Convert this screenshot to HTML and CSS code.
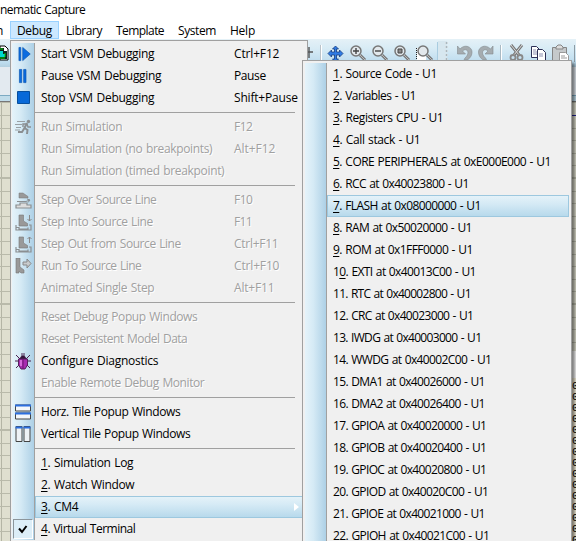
FILE: index.html
```
<!DOCTYPE html>
<html lang="en">
<head>
<meta charset="utf-8">
<title>Schematic Capture</title>
<link rel="stylesheet" href="styles.css">
</head>
<body>
<div class="window">
  <header class="titlebar"><span data-w="85">nematic Capture</span></header>
  <nav class="menubar">
    <span class="cut">n</span>
    <span class="menu-title open"><span data-w="34.7">Debug</span></span>
    <span class="menu-title"><span data-w="35.7">Library</span></span>
    <span class="menu-title"><span data-w="47.7">Template</span></span>
    <span class="menu-title"><span data-w="37.7">System</span></span>
    <span class="menu-title"><span data-w="24.7">Help</span></span>
  </nav>
  <div class="toolbar">
    <svg class="chip" width="9" height="18" viewBox="0 0 9 18"><path d="M0 1h5l3 3v11H0z" fill="#fff" stroke="#000"/><path d="M0 3h4v3h3v8H0z" fill="#0a2520"/><path d="M0 6h3v3h2v3H0z" fill="#00d8d0"/><path d="M0 4h3M5 8v4M0 13h5" stroke="#00d000"/></svg>
    <svg class="tools" width="269" height="28" viewBox="307 39 269 28">
      <path d="M307 52h6M309 47v11" stroke="#555" stroke-width="1.4"/>
      <path d="M320.500 45v21" stroke="#bac3ca"/><path d="M321.500 45v21" stroke="#fff"/>
      <path d="M335.500 46l3 3h-2v3h3v-2l3.500 3.500-3.500 3.500v-2h-3v4h2l-3 3-3-3h2v-4h-3v2l-3.500-3.500 3.500-3.500v2h3v-3h-2z" fill="#2f7be5" stroke="#173c7c" stroke-width=".8"/>
      <g id="lens"><circle cx="356" cy="51" r="5" fill="#e2e8ec" stroke="#777" stroke-width="1.500"/><path d="M360 55l5 5" stroke="#777" stroke-width="3"/><path d="M360 55l5 5" stroke="#bbb"/></g>
      <path d="M353 51h6M356 48v6" stroke="#444" stroke-width="1.400"/>
      <use href="#lens" x="22"/><path d="M375 51h6" stroke="#444" stroke-width="1.400"/>
      <use href="#lens" x="44"/><path d="M398 49h4v4h-4z" fill="#888" stroke="#444"/>
      <path d="M417 48h9v14h-9z" fill="#fff"/><path d="M416.500 48v14" stroke="#222" stroke-dasharray="1 1"/>
      <use href="#lens" x="67"/>
      <path d="M437.500 42v24" stroke="#a9cce0"/><path d="M438 41h9v26h-9z" fill="#d7e7ef"/>
      <path d="M446.500 42v24" stroke="#fff" stroke-width="3" stroke-dasharray="2 2"/><path d="M446.500 42v24" stroke="#a8b8c0" stroke-width="2" stroke-dasharray="2 2"/>
      <path id="undo" d="M457.500 46v8h8l-3-3c3-2.500 5.500-1 5.500 2-.2 3-3 4.500-4 6.500h4c3-2 4-5 4-7.500 0-5-7-8.500-12-3z" fill="#a5acb0" stroke="#858b8f" stroke-width=".6"/>
      <use href="#undo" transform="matrix(-1 0 0 1 950.500 0)"/>
      <path d="M500.500 45v21" stroke="#a9bac4"/><path d="M501.500 45v21" stroke="#fff"/>
      <path d="M511 45l8 10M522 45l-8 10" stroke="#777" stroke-width="3"/><path d="M511 45l8 10M522 45l-8 10" stroke="#ddd"/><circle cx="513" cy="57.500" r="2.500" fill="none" stroke="#888" stroke-width="1.800"/><circle cx="520" cy="57.500" r="2.500" fill="none" stroke="#888" stroke-width="1.800"/>
      <path id="sheet" d="M531.500 46.500h5l3 3v8h-8z" fill="#fff" stroke="#2e3157"/><use href="#sheet" x="6" y="3"/><path d="M533 50h3M533 52h4M533 54h4M539 54h4M539 56h4" stroke="#8d90b0"/>
      <path d="M552.500 47.500h14v14h-14z" fill="#c5c9cb" stroke="#858585"/><path d="M556 49v-2l2-2h3l2 2v2z" fill="#ddd" stroke="#858585"/><path d="M559.500 52.500h6l3 3v6h-9z" fill="#fff" stroke="#999"/><path d="M561 56h4M561 58h6" stroke="#999"/>
      <path d="M574.500 45v17" stroke="#8d9ba4"/>
    </svg>
  </div>
  <div class="panel"></div>
  <div class="ruler"></div>
  <main class="canvas">
    <svg class="grid" width="576" height="439" viewBox="0 102 576 439" id="grid"></svg>
    <div class="hexdump" id="hexdump"></div>
  </main>
</div>

<section class="popup main-menu" id="mainMenu"></section>
<section class="popup sub-menu" id="subMenu"></section>

<script>
const foot = '<path d="M4 1h4.500v6l4 2.500V12H4z" fill="#999" stroke="#777" stroke-width=".6"/><path d="M1 11v5h15v-5h-2M1 13.500h3v1.500h9v-1.500" fill="none" stroke="#8b8f92" stroke-width="1.200"/>';
const icons = {
  start: '<path d="M1 1h2v14H1zM5 1l8 7-8 7z" fill="#0b6ce0" stroke="#0754b0" stroke-width=".7"/>',
  pause: '<path d="M1.500 1h2.500v14H1.500zM6 1h2.500v14H6z" fill="#0b6ce0" stroke="#0754b0" stroke-width=".7"/>',
  stop: '<path d="M.5 1.500h12v12H.5z" fill="#0869d8" stroke="#064f9e"/>',
  run: '<path d="M12 4L9.500 9l3 2-.5 4M9.500 9L7 13H3" fill="none" stroke="#8b8f92" stroke-width="2"/><path d="M8 8V5h4l1 3h3" fill="none" stroke="#8b8f92" stroke-width="1.400"/><circle cx="13.500" cy="2.500" r="1.700" fill="#8b8f92"/><path d="M2 2.500h8M0 5.500h7M1 8.500h5M0 11h5" stroke="#9aa0a4"/>',
  over: '<path d="M4 1h4l5 3.500V6H4z" fill="#999" stroke="#777" stroke-width=".5"/><path d="M2 9.500h9l4-1.500M12 7l3 1-2 2.500" fill="none" stroke="#8b8f92"/><path d="M1 16v-3h4v-2h7v2h4v3z" fill="#ddd" stroke="#8b8f92" stroke-width="1.200"/>',
  into: foot + '<path d="M14.500 1v6M12.500 5l2 2 2-2" stroke="#888" fill="none"/>',
  out: foot + '<path d="M14.500 7V1M12.500 3l2-2 2 2" stroke="#888" fill="none"/>',
  to: '<path d="M1 0h4v9l4 3v3H6l-2-2v2H1z" fill="#999" stroke="#777" stroke-width=".6"/><path d="M8 4h4V1l4 4.500-4 4.500V7H8z" fill="#c8cbcd" stroke="#888"/>',
  bug: '<path d="M1 2l4 4M15 2l-4 4M0 8h4M16 8h-4M1 15l4-4M15 15l-4-4M7 0v3M9 0v3" stroke="#4a2350"/><path d="M5 4.500q3-4 6 0V6H5z" fill="#35153a"/><path d="M3.500 6h9v6l-2.500 4H6l-2.500-4z" fill="#a82bb0" stroke="#57205e"/><path d="M6 7v6" stroke="#e481e8" stroke-width="1.500"/><path d="M8 6v10" stroke="#6a1570"/>',
  horz: '<path d="M.5 1h15v6H.5zM.5 9h15v6H.5z" fill="#f4f7fa" stroke="#444"/><path d="M0 1.500h16M0 9.500h16" stroke="#2b6fe0" stroke-width="2"/>',
  vert: '<path d="M1 .5h6v15H1zM9 .5h6v15H9z" fill="#eef2f6" stroke="#444"/><path d="M.5 1.500h7M8.500 1.500h7" stroke="#2b6fe0" stroke-width="2"/>'
};
const mainItems = [
  ['Start VSM Debugging', 113, 'Ctrl+F12', 45, 'start'], ['Pause VSM Debugging', 120, 'Pause', 31.5, 'pause'], ['Stop VSM Debugging', 113, 'Shift+Pause', 63.5, 'stop'], null,
  ['Run Simulation', 81, 'F12', 18, 'run', 1], ['Run Simulation (no breakpoints)', 171, 'Alt+F12', 41, '', 1], ['Run Simulation (timed breakpoint)', 183, '', 0, '', 1], null,
  ['Step Over Source Line', 115, 'F10', 18, 'over', 1], ['Step Into Source Line', 111.5, 'F11', 17.5, 'into', 1], ['Step Out from Source Line', 139.5, 'Ctrl+F11', 44, 'out', 1], ['Run To Source Line', 100, 'Ctrl+F10', 45, 'to', 1], ['Animated Single Step', 113, 'Alt+F11', 40, '', 1], null,
  ['Reset Debug Popup Windows', 156, '', 0, '', 1], ['Reset Persistent Model Data', 146, '', 0, '', 1], ['Configure Diagnostics', 117, '', 0, 'bug'], ['Enable Remote Debug Monitor', 163, '', 0, '', 1], null,
  ['Horz. Tile Popup Windows', 139, '', 0, 'horz'], ['Vertical Tile Popup Windows', 149, '', 0, 'vert'], null,
  ['<u>1</u>. Simulation Log', 92, '', 0], ['<u>2</u>. Watch Window', 93, '', 0], ['<u>3</u>. CM4', 37, '', 0, '', 0, 'hot'], ['<u>4</u>. Virtual Terminal', 94, '', 0, '', 0, 'checked']
];
const subItems = [
  ['<u>1</u>. Source Code - U1', 103.5], ['<u>2</u>. Variables - U1', 82.5], ['<u>3</u>. Registers CPU - U1', 110], ['<u>4</u>. Call stack - U1', 87],
  ['<u>5</u>. CORE PERIPHERALS at 0xE000E000 - U1', 217.5], ['<u>6</u>. RCC at 0x40023800 - U1', 135.5], ['<u>7</u>. FLASH at 0x08000000 - U1', 147.5],
  ['<u>8</u>. RAM at 0x50020000 - U1', 138.5], ['<u>9</u>. ROM at 0x1FFF0000 - U1', 139.5], ['1<u>0</u>. EXTI at 0x40013C00 - U1', 142.5],
  ['11. RTC at 0x40002800 - U1', 137.5], ['12. CRC at 0x40023000 - U1', 140], ['13. IWDG at 0x40003000 - U1', 148], ['14. WWDG at 0x40002C00 - U1', 158],
  ['15. DMA1 at 0x40026000 - U1', 151.5], ['16. DMA2 at 0x40026400 - U1', 151.5], ['17. GPIOA at 0x40020000 - U1', 153], ['18. GPIOB at 0x40020400 - U1', 153],
  ['19. GPIOC at 0x40020800 - U1', 153], ['20. GPIOD at 0x40020C00 - U1', 155], ['21. GPIOE at 0x40021000 - U1', 151.5], ['22. GPIOH at 0x40021C00 - U1', 156]
];
const span = (cls, t, w) => t ? `<span class="${cls}"><span data-w="${w}">${t}</span></span>` : '';
document.getElementById('mainMenu').innerHTML = mainItems.map(r => {
  if (!r) return '<div class="separator"><span class="gutter"></span><hr></div>';
  const [t, w, k, kw, ic, off, st] = r;
  const check = st === 'checked' ? '<span class="check"><svg width="10" height="9" viewBox="0 0 10 9"><path d="M1 3.500L4 7l4.500-6" fill="none" stroke="#000" stroke-width="2"/></svg></span>' : '';
  const arrow = st === 'hot' ? '<svg class="arrow" width="5" height="8" viewBox="0 0 5 8"><path d="M0 0l5 4-5 4z" fill="#fff"/></svg>' : '';
  return `<div class="item ${off ? 'disabled' : ''}"><span class="gutter">${ic ? `<svg class="icon ${ic}" width="17" height="17" viewBox="0 0 17 17">${icons[ic]}</svg>` : ''}${check}</span><span class="body ${st || ''}">${span('label', t, w)}${span('key', k, kw)}${arrow}</span></div>`;
}).join('');
document.getElementById('subMenu').innerHTML = subItems.map(([t, w], i) =>
  `<div class="item"><span class="gutter"></span><span class="body ${i === 6 ? 'hot' : ''}">${span('label', t, w)}</span></div>`).join('');

let lines = '<path d="M1.500 102v439" stroke="#b4b5a5"/>';
for (let i = 4; i < 40; i++) {
  const y = Math.round(52 + i * 12.6) + (i % 10 ? 0.5 : 0);
  lines += `<path d="M0 ${y}h576" stroke="#b9baaa" stroke-width="${i % 10 ? 1 : 2}"/>`;
}
lines += '<path d="M560 115.500h16" stroke="#20209a"/>';
document.getElementById('grid').innerHTML = lines;
document.getElementById('hexdump').innerHTML = '<span>0</span>'.repeat(15);

document.querySelectorAll('[data-w]').forEach(el => {
  const gap = (+el.dataset.w + 0.3 - el.getBoundingClientRect().width) / el.textContent.length;
  el.style.letterSpacing = gap.toFixed(3) + 'px';
});
</script>
</body>
</html>
```
FILE: styles.css
```
* { box-sizing: border-box; }
body {
  margin: 0;
  width: 576px;
  height: 541px;
  overflow: hidden;
  position: relative;
  background: #fff;
  color: #000;
  font: 12px/22px "Open Sans", "Noto Sans", sans-serif;
  word-spacing: 0.8px;
  white-space: nowrap;
}
.window { display: flex; flex-direction: column; height: 541px; }
.titlebar { height: 21px; line-height: 20px; }
.menubar { display: flex; height: 18px; line-height: 19px; }
.cut { width: 10px; text-indent: -4px; overflow: hidden; }
.menu-title { padding: 0 7px; }
.menu-title.open { background: #cce8ff; box-shadow: inset 0 0 0 1px #99d1ff; }
.toolbar {
  display: flex;
  justify-content: space-between;
  height: 28px;
  background: linear-gradient(#e5f1f7, #d7ebf5 35%, #bddcee 85%, #b3d0e0);
}
.chip { margin-top: 6px; }
.panel { height: 28px; background: #e3eaf0; }
.ruler { height: 7px; border: solid #7caac2; border-width: 1px 0; background: #c0dcea; border-bottom-color: #777; }
.canvas { display: flex; flex: 1; position: relative; background: #dfdfcf; }
.grid { flex: none; }
.hexdump {
  position: absolute;
  right: 0;
  top: 249px;
  width: 8px;
  height: 190px;
  padding-top: 30px;
  display: flex;
  flex-direction: column;
  background: linear-gradient(#fff 0 27px, #fbf5df 27px);
  font: 11px/11px "Liberation Mono", monospace;
  overflow: hidden;
}
.hexdump span { height: 11px; padding-left: 4px; }

.popup { position: absolute; background: #f0f0f0; border: 1px solid #a0a0a0; padding-top: 2px; }
.main-menu { left: 10px; top: 40px; width: 298px; height: 502px; }
.sub-menu { left: 302px; top: 60px; width: 270px; height: 490px; box-shadow: 3px 3px 3px rgba(0, 0, 0, .5); }
.item { display: flex; height: 22px; }
.gutter {
  flex: none;
  width: 23px;
  margin-left: 1px;
  display: flex;
  align-items: center;
  border-right: 1px solid #a0a0a0;
  background: linear-gradient(90deg, #e5f3fa, #d5eaf5 40%, #add0e6);
}
.sub-menu .gutter { margin-left: 2px; width: 22px; }
.body { flex: 1; display: flex; align-items: center; padding: 0 0 1px 6px; line-height: 20px; }
.label { width: 193px; }
.body.hot {
  background: linear-gradient(#e6f3f9, #d5eaf5 40%, #b5d8eb);
  box-shadow: inset 0 0 0 1px #9dc8df;
}
.sub-menu .body { margin-right: 2px; }
.disabled .body { color: #a0a0a0; text-shadow: 1px 1px 0 #fff; }
.body u { text-underline-offset: 2px; text-decoration-thickness: 1px; }
.icon { margin-left: 3px; }
.icon.start { margin-left: 6px; }
.icon.pause { margin-left: 6px; }
.icon.stop { margin-left: 5px; }
.arrow { margin-left: 60px; }
.check {
  display: flex;
  align-items: center;
  justify-content: center;
  width: 20px;
  height: 20px;
  margin-left: 1px;
  border: 1px solid #8c959b;
  border-right-color: #fff;
  border-bottom-color: #fff;
  background: #dceef8;
}
.separator { display: flex; height: 7px; }
.separator hr { flex: 1; height: 1px; margin: 3px 12px 0 0; border: 0; background: #a0a0a0; }
```
